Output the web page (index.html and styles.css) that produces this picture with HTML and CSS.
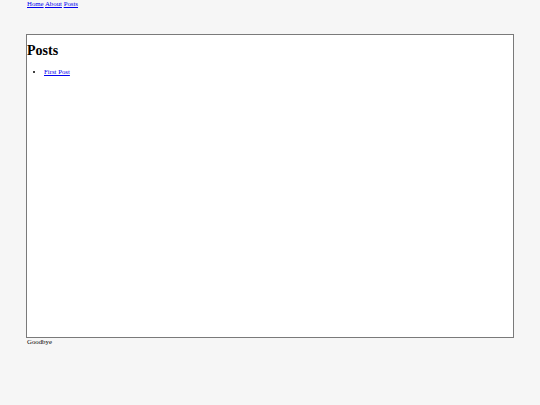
FILE: index.html
```html
<!DOCTYPE html>
<html lang="en">
<head>
    <meta charset="UTF-8">
    <meta name="viewport" content="width=device-width, initial-scale=1.0">
    <title>Posts</title>
    <link rel="stylesheet" href="styles.css">
</head>
<body>
    <div class="page">
        <nav class="nav">
            <a href="#">Home</a> <a href="#">About</a> <a href="#">Posts</a>
        </nav>
        <div class="frame">
            <h1>Posts</h1>
            <ul>
                <li><a href="#">First Post</a></li>
            </ul>
        </div>
        <footer class="foot">Goodbye</footer>
    </div>
</body>
</html>
```

FILE: styles.css
```css
body { margin: 0; padding: 0; background: #f6f6f6; font-family: "Liberation Serif", serif; font-size: 6.8px; color: #000; }
a { color: #0000ee; }
.page { width: 488px; margin: 0 auto; }

.nav { line-height: 7px; height: 7px; margin-bottom: 27px; padding-left: 1px; }

.frame { height: 302px; border: 1px solid #7a7a7a; background: #fff; overflow: hidden; }
.frame h1 { font-size: 14px; margin: 8px 0 9px 0; }
.frame ul { margin: 0; padding-left: 17px; }

.foot { line-height: 8px; padding-left: 1px; }
```
